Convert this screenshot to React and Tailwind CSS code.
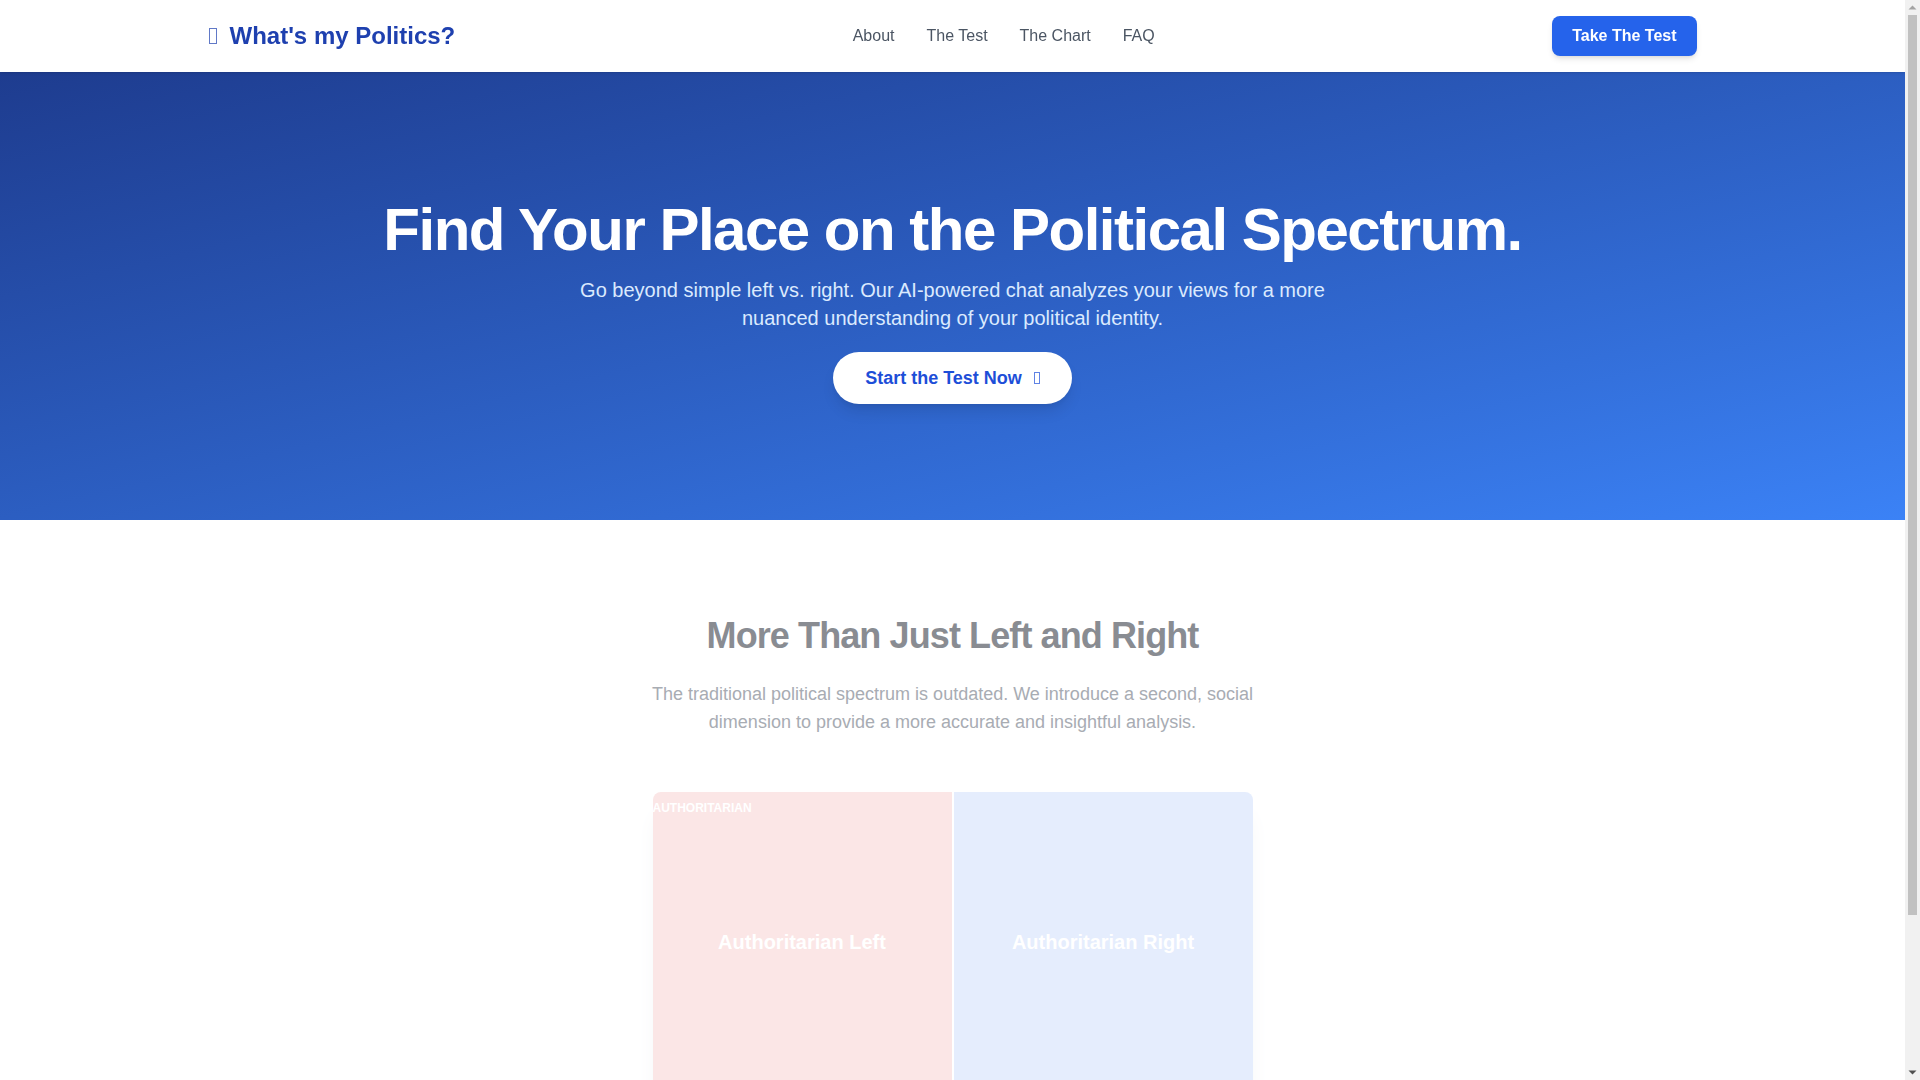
import React from 'react';

// missing-glyph box, like an icon font that failed to load
const Tofu = ({ className }) => (
    <span className={`inline-block border border-current opacity-70 ${className}`}></span>
);

const navLinks = ['About', 'The Test', 'The Chart', 'FAQ'];

const quadrants = [
    { label: 'Authoritarian Left', bg: 'bg-[#fbe6e6]' },
    { label: 'Authoritarian Right', bg: 'bg-[#e5edfd]' },
    { label: 'Libertarian Left', bg: 'bg-[#e3f5e9]' },
    { label: 'Libertarian Right', bg: 'bg-[#f3ebfb]' },
];

const ScrollTrack = () => (
    <div className="w-[15px] shrink-0 bg-[#f1f1f1] flex flex-col items-center">
        <svg width="15" height="15" viewBox="0 0 15 15" className="shrink-0">
            <path d="M3.5 9.5 L7.5 5.5 L11.5 9.5 Z" fill="#a3a3a3" />
        </svg>
        <div className="w-[9px] h-[900px] bg-[#c1c1c1]"></div>
        <div className="flex-1"></div>
        <svg width="15" height="15" viewBox="0 0 15 15" className="shrink-0">
            <path d="M3.5 5.5 L7.5 9.5 L11.5 5.5 Z" fill="#505050" />
        </svg>
    </div>
);

const App = () => {
    return (
        <div className="h-screen flex bg-white font-['Liberation_Sans',Arial,sans-serif] text-gray-800">
            <div className="flex-1 min-w-0 overflow-y-auto">
                {/* Navbar */}
                <header className="sticky top-0 z-50 bg-white shadow-sm">
                    <div className="max-w-[1536px] mx-auto px-6 h-[72px] flex items-center justify-between">
                        <a href="#" className="flex items-center text-[#1e40af]">
                            <Tofu className="w-[8px] h-[16px] mr-[13px]" />
                            <span className="text-2xl font-bold">What's my Politics?</span>
                        </a>
                        <nav className="flex items-center gap-8">
                            {navLinks.map((link) => (
                                <a key={link} href="#" className="text-base text-[#4b5563] hover:text-blue-700">
                                    {link}
                                </a>
                            ))}
                        </nav>
                        <button className="bg-[#2563eb] text-white font-bold text-base px-5 py-2 rounded-lg shadow-md">
                            Take The Test
                        </button>
                    </div>
                </header>

                {/* Hero */}
                <section className="bg-linear-to-br from-[#1e3c8f] to-[#3b82f6] text-white pt-[128px] pb-[116px]">
                    <div className="max-w-[1536px] mx-auto px-6 flex flex-col items-center text-center">
                        <h1 className="text-6xl font-bold tracking-tight">Find Your Place on the Political Spectrum.</h1>
                        <p className="mt-4 max-w-3xl text-xl text-[#dbeafe]">
                            Go beyond simple left vs. right. Our AI-powered chat analyzes your views for a more nuanced understanding of your political identity.
                        </p>
                        <button className="mt-5 bg-white text-[#1d4ed8] font-bold text-lg px-8 py-3 rounded-full shadow-lg flex items-center">
                            Start the Test Now
                            <Tofu className="w-[6px] h-[12px] ml-[12px]" />
                        </button>
                    </div>
                </section>

                {/* Compass intro */}
                <section className="pt-24 pb-24">
                    <div className="max-w-[1536px] mx-auto px-6 flex flex-col items-center text-center">
                        <h2 className="text-4xl font-bold tracking-tight text-[#898c92]">More Than Just Left and Right</h2>
                        <p className="mt-6 max-w-2xl text-lg text-[#a8acb3]">
                            The traditional political spectrum is outdated. We introduce a second, social dimension to provide a more accurate and insightful analysis.
                        </p>
                        <div className="relative mt-14 w-[600px] h-[600px] grid grid-cols-2 grid-rows-2 gap-0.5 bg-white rounded-lg overflow-hidden shadow-xl shadow-gray-100">
                            {quadrants.map((q) => (
                                <div key={q.label} className={`${q.bg} flex items-center justify-center`}>
                                    <span className="text-xl font-bold text-white">{q.label}</span>
                                </div>
                            ))}
                            <span className="absolute top-2 left-0 text-xs font-bold uppercase text-white">Authoritarian</span>
                            <span className="absolute bottom-2 left-0 text-xs font-bold uppercase text-white">Libertarian</span>
                        </div>
                    </div>
                </section>
            </div>
            <ScrollTrack />
        </div>
    );
};

export default App;
